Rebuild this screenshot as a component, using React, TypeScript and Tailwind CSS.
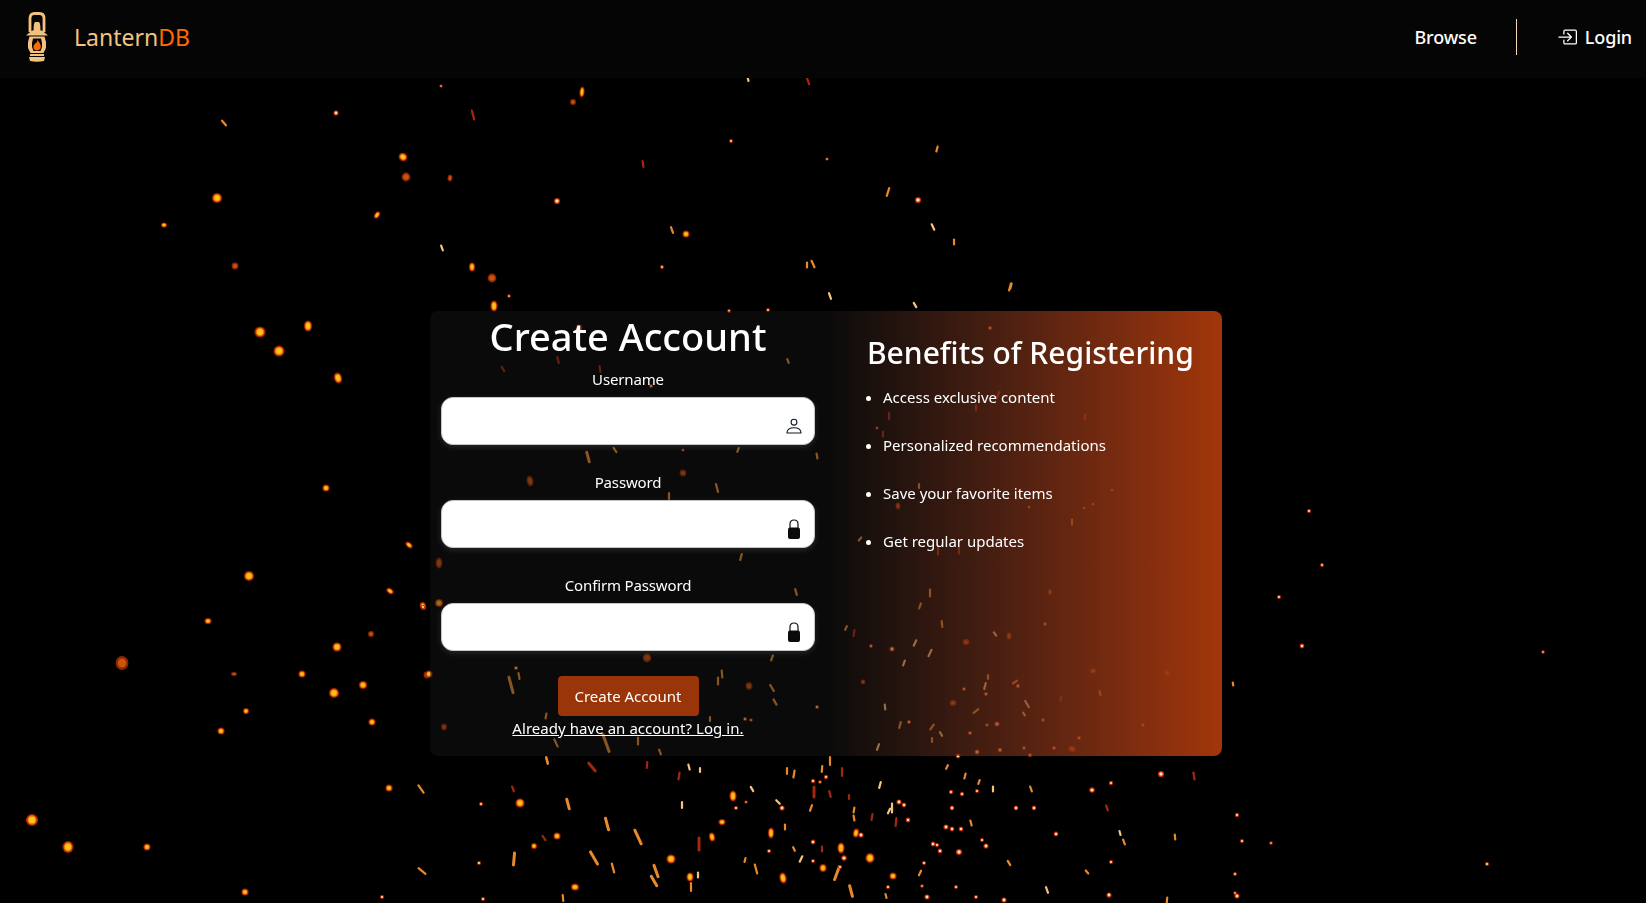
import React from 'react';
import { BsBoxArrowInRight } from 'react-icons/bs';

// [x, y, rx, ry, rotation]
const embers: number[][] = [
  [403, 157, 4, 3.5, 40], [217, 198, 4.5, 4.5, 0], [164, 225, 2.5, 2, 0], [377, 215, 2, 3.5, 35], [472, 267, 2.5, 4, 0],
  [494, 306, 3, 5, 0], [582, 92, 2, 5, 5], [260, 332, 5, 5, 0], [279, 351, 5, 5, 0], [308, 326, 3.5, 5, 0],
  [338, 378, 3.5, 5, -15], [326, 488, 3, 3, 0], [249, 576, 4.5, 4.5, 0], [390, 591, 3.5, 2, 35], [409, 545, 3.5, 2, 40],
  [423, 606, 2.5, 3.5, -15], [439, 603, 3.5, 3.5, 0], [337, 647, 4, 4, 0], [302, 674, 3, 3, 0], [334, 693, 4.5, 4.5, 0],
  [363, 685, 3.5, 3.5, 0], [429, 674, 3, 3, 0], [246, 711, 2.5, 2.5, 0], [221, 731, 3, 3, 0], [372, 722, 3, 3, 0],
  [68, 847, 5, 5.5, 0], [32, 820, 5.5, 5.5, 0], [147, 847, 3, 3, 0], [245, 892, 3, 3, 0], [389, 788, 3, 3, 0],
  [520, 803, 4, 4, 0], [557, 836, 3, 3, 0], [534, 846, 2.5, 2.5, 0], [575, 887, 3.5, 3, 0], [733, 796, 3, 5, 0],
  [712, 837, 2.5, 4, -10], [771, 833, 2.5, 5, 0], [671, 859, 4, 4, 0], [690, 877, 3, 4, 0], [783, 878, 3, 5, -10],
  [841, 848, 3, 5, 0], [823, 868, 3, 3.5, 0], [870, 858, 4, 4.5, 0], [893, 876, 3, 3, 0], [856, 833, 2.5, 4, 10],
  [722, 822, 3, 2.5, 0], [686, 234, 3, 3, 0], [208, 621, 3, 2.5, 0],
];

const dimEmbers: number[][] = [
  [406, 177, 4, 4, 0], [450, 178, 2, 3, 10], [492, 278, 4, 4, 0], [235, 266, 3, 3, 0], [573, 102, 2.5, 2.5, 0],
  [122, 663, 6, 6.5, 0], [371, 634, 2.5, 2.5, 0], [234, 674, 2.5, 1.5, 0], [579, 328, 3, 3, 0], [530, 481, 3, 5, -10],
  [683, 473, 3, 3, 0], [647, 658, 4, 4, 0], [749, 686, 3, 3.5, -15], [439, 563, 3, 5, 0], [427, 675, 3, 3, 0],
  [444, 727, 2.5, 3, 0], [966, 642, 3, 2.5, 0], [953, 703, 3, 2.5, 0], [1072, 749, 3.5, 2.5, 20], [1009, 636, 2, 3, 0],
  [1093, 671, 2.5, 2, 0], [1167, 673, 2.5, 2.5, 0], [898, 506, 2, 3, 0], [863, 682, 2, 2, 0], [1050, 592, 1.5, 2.5, 0],
];

// [x, y, length, degrees from vertical, kind 0 pale 1 orange 2 red]
const streaks: number[][] = [
  [224, 123, 6, -40, 1], [473, 115, 9, -15, 2], [442, 248, 5, -20, 0], [748, 79, 4, -15, 0], [808, 81, 7, -20, 2],
  [643, 164, 6, -10, 2], [937, 149, 5, 15, 1], [888, 192, 8, 18, 1], [933, 227, 6, -25, 0], [954, 242, 5, 0, 1],
  [672, 230, 6, -20, 1], [807, 265, 5, 0, 1], [813, 264, 7, -25, 1], [830, 296, 6, -20, 0], [915, 305, 5, -30, 0],
  [1010, 287, 7, 15, 1], [421, 789, 9, -35, 1], [568, 804, 10, -15, 1], [544, 838, 5, -35, 2], [513, 789, 5, -20, 2],
  [514, 859, 12, 5, 1], [422, 871, 9, -50, 1], [594, 858, 14, -30, 1], [563, 898, 6, -5, 1], [592, 767, 10, -40, 2],
  [547, 761, 6, -15, 1], [511, 685, 16, -15, 1], [519, 676, 6, -10, 1], [503, 369, 5, -30, 2], [600, 369, 6, -10, 2],
  [558, 360, 6, -15, 2], [788, 361, 4, -20, 1], [588, 457, 10, -15, 1], [615, 450, 5, -35, 1], [717, 488, 8, -15, 1],
  [669, 496, 6, 0, 1], [738, 450, 4, 20, 1], [817, 456, 5, -10, 1], [741, 557, 6, 15, 1], [796, 592, 6, -15, 1],
  [772, 658, 5, 20, 1], [722, 674, 7, -5, 1], [718, 681, 7, 0, 1], [772, 688, 7, -30, 1], [775, 702, 6, -30, 1],
  [710, 719, 4, 0, 1], [546, 716, 5, 10, 1], [556, 743, 8, -25, 1], [638, 741, 7, 0, 1], [606, 743, 18, -20, 1],
  [660, 752, 5, -20, 1], [547, 760, 6, -15, 1], [889, 416, 6, 0, 2], [883, 434, 5, 0, 2], [976, 408, 5, 0, 2],
  [1085, 417, 5, 10, 2], [998, 395, 7, 25, 2], [919, 486, 4, 0, 1], [1072, 522, 5, 0, 1], [959, 550, 7, 0, 2],
  [938, 550, 9, 0, 2], [860, 539, 4, 40, 1], [930, 593, 7, 0, 1], [920, 606, 5, 20, 1], [846, 628, 4, 25, 1],
  [854, 633, 6, 10, 2], [942, 624, 6, -5, 1], [995, 634, 4, -35, 0], [915, 643, 6, 25, 0], [930, 653, 7, 25, 0],
  [904, 663, 5, 20, 0], [988, 677, 4, 0, 1], [985, 686, 6, 15, 0], [1015, 682, 5, 55, 1], [1027, 704, 7, -30, 0],
  [885, 707, 5, -5, 0], [976, 711, 6, 50, 1], [1024, 714, 3, -30, 0], [900, 725, 6, 15, 1], [932, 727, 6, 35, 1],
  [941, 734, 4, -30, 0], [932, 740, 4, 0, 1], [1061, 699, 4, 15, 2], [1100, 693, 4, -15, 1], [878, 747, 6, 20, 0],
  [830, 761, 8, 0, 1], [822, 769, 6, 5, 1], [787, 771, 6, 0, 1], [794, 774, 7, 10, 1], [752, 789, 5, -30, 0],
  [778, 802, 5, -45, 0], [682, 805, 6, 0, 0], [689, 767, 5, -15, 0], [700, 770, 4, 0, 0], [647, 765, 6, 5, 2],
  [679, 776, 7, 10, 2], [607, 824, 12, -15, 1], [638, 837, 15, -25, 1], [785, 827, 5, 0, 1], [699, 844, 12, 0, 2],
  [656, 871, 12, -20, 1], [654, 881, 11, -30, 1], [613, 868, 9, -15, 1], [698, 875, 5, 0, 0], [691, 887, 8, 0, 1],
  [745, 860, 4, 15, 1], [756, 869, 9, -15, 1], [794, 849, 4, -25, 1], [801, 859, 6, 25, 0], [822, 849, 5, 0, 2],
  [837, 873, 14, 20, 1], [851, 891, 11, -15, 1], [920, 873, 5, 25, 1], [886, 896, 4, -15, 1], [1047, 890, 6, -20, 0],
  [1009, 863, 5, -30, 1], [1087, 872, 4, -40, 1], [971, 823, 5, -15, 1], [854, 818, 5, -10, 1], [872, 817, 6, 10, 2],
  [896, 822, 8, 5, 2], [892, 808, 9, 0, 0], [889, 811, 5, 25, 0], [880, 785, 6, 15, 0], [1031, 789, 5, -20, 1],
  [993, 789, 5, 0, 0], [979, 782, 4, 20, 1], [965, 776, 5, 15, 1], [947, 767, 4, 25, 1], [1194, 776, 7, -10, 2],
  [1107, 808, 5, -20, 2], [1124, 842, 5, -20, 1], [1120, 833, 4, -15, 0], [1175, 837, 5, -5, 1], [842, 772, 8, 0, 2],
  [814, 792, 10, 0, 2], [830, 794, 6, -15, 2], [849, 797, 4, 0, 2], [811, 808, 6, 20, 1], [854, 810, 5, 10, 1],
  [1167, 900, 5, 5, 1], [1011, 286, 5, 15, 1], [1233, 684, 3, -10, 1],
];

// [x, y, r]
const sparks: number[][] = [
  [336, 113, 2], [557, 201, 2.5], [918, 200, 2.5], [509, 296, 1.2], [441, 86, 1], [731, 141, 1.3], [827, 159, 1], [662, 267, 1.3],
  [768, 310, 1.3], [729, 311, 1.3], [651, 386, 1.5], [683, 450, 1], [990, 328, 1.5], [1029, 507, 1], [481, 804, 1.4], [479, 863, 1.5],
  [483, 899, 1.5], [382, 897, 1.5], [782, 808, 2], [736, 808, 1.5], [746, 802, 1], [769, 851, 1.5], [813, 842, 1.8], [813, 861, 1.4],
  [844, 858, 2.2], [840, 867, 1.5], [861, 835, 2], [888, 887, 1.5], [927, 897, 2], [922, 886, 1.2], [956, 887, 1.4], [976, 897, 1.5],
  [1004, 900, 2], [1109, 895, 2], [1237, 896, 2], [1111, 862, 1.5], [986, 846, 2], [959, 852, 2.5], [982, 840, 1.4], [940, 851, 1.8],
  [933, 844, 1.8], [937, 845, 1.5], [924, 863, 1.5], [961, 829, 1.8], [952, 829, 1.8], [946, 827, 2], [908, 820, 1.8], [899, 802, 2],
  [904, 805, 1.8], [952, 808, 1.8], [1016, 808, 1.8], [1034, 808, 1.8], [962, 794, 1.6], [951, 792, 1.6], [977, 791, 1.4], [1161, 774, 2.5],
  [1092, 790, 2.2], [1111, 783, 1.6], [1056, 834, 1.8], [1237, 815, 1.6], [1242, 841, 1.4], [1271, 843, 1.2], [1235, 874, 1.3], [813, 781, 1.6],
  [826, 777, 1.6], [820, 782, 1.2], [1309, 511, 1.5], [1322, 565, 1.3], [1279, 597, 1.5], [1302, 646, 1.8], [1543, 652, 1.2], [1487, 864, 1.5],
  [1235, 893, 1.2], [892, 649, 2], [871, 646, 1.3], [964, 689, 1.3], [986, 694, 1.5], [1018, 686, 1.6], [1045, 624, 1.3], [909, 722, 1.5],
  [987, 725, 1.2], [997, 724, 2], [970, 733, 1.5], [1043, 720, 1.3], [1079, 738, 1.4], [1000, 750, 1.8], [977, 752, 2], [1024, 748, 1.3],
  [1054, 748, 1.5], [958, 756, 1.8], [1030, 755, 1.5], [1143, 725, 1.3], [1084, 508, 1], [1093, 504, 1], [1112, 490, 1], [877, 428, 1],
  [745, 719, 1.4], [751, 720, 1.2], [817, 707, 1.5], [516, 668, 1.5], [423, 607, 1.5],
];

const streakColor = ['#f7c47c', '#e8892c', '#a3280a'];

const EmberField = () => (
  <svg className="absolute inset-0 h-full w-full" viewBox="0 0 1646 903" aria-hidden="true">
    <defs>
      <filter id="soft" x="-50%" y="-50%" width="200%" height="200%">
        <feGaussianBlur stdDeviation="0.7" />
      </filter>
    </defs>
    <g filter="url(#soft)">
      {dimEmbers.map(([x, y, rx, ry, rot], i) => (
        <g key={i} transform={`translate(${x} ${y}) rotate(${rot})`}>
          <ellipse rx={rx + 0.4} ry={ry + 0.4} fill="#8f2503" />
          <ellipse rx={rx * 0.7} ry={ry * 0.7} fill="#c8540a" />
        </g>
      ))}
      {embers.map(([x, y, rx, ry, rot], i) => (
        <g key={i} transform={`translate(${x} ${y}) rotate(${rot})`}>
          <ellipse rx={rx + 0.6} ry={ry + 0.6} fill="#a81d00" />
          <ellipse rx={rx * 0.85} ry={ry * 0.85} fill="#e97a06" />
          <ellipse rx={rx * 0.6} ry={ry * 0.6} fill="#fdc21d" />
        </g>
      ))}
      {streaks.map(([x, y, len, deg, kind], i) => (
        <line
          key={i}
          x1={x}
          y1={y - len / 2}
          x2={x}
          y2={y + len / 2}
          transform={`rotate(${deg} ${x} ${y})`}
          stroke={streakColor[kind]}
          strokeWidth={len > 9 ? 3 : 2.2}
          strokeLinecap="round"
        />
      ))}
      {sparks.map(([x, y, r], i) => (
        <g key={i}>
          <circle cx={x} cy={y} r={r + 0.6} fill="#c22a05" />
          <circle cx={x} cy={y} r={r * 0.7} fill="#ffe7a8" />
        </g>
      ))}
    </g>
  </svg>
);

const LanternLogo = () => (
  <svg width="22" height="50" viewBox="0 0 22 50" aria-hidden="true">
    <path d="M4 20V6.5Q4 1.5 8.5 1.5H13.5Q18 1.5 18 6.5V20" fill="none" stroke="#f4c27f" strokeWidth="2.8" />
    <path d="M7.5 19Q7.5 11 9 10H13Q14.5 11 14.5 19Z" fill="#f4c27f" />
    <path d="M0 23.5 6 18.5H16L22 23.5Z" fill="#f4c27f" />
    <path d="M3.5 24.5H18.5L20 30V36L17.5 41H4.5L2 36V30Z" fill="#f4c27f" />
    <path d="M7 26.5H15L16 31V35L14.5 39H7.5L6 35V31Z" fill="#050505" />
    <path
      d="M11.5 27.5C12.5 30 15 31.5 14.8 35C14.6 37.3 12.8 38.5 11 38.5C9 38.5 7.3 37 7.4 35C7.5 33.2 8.7 32.6 9.3 31C10.3 31.6 11.5 30 11.5 27.5Z"
      fill="#ff6a00"
    />
    <rect x="4" y="42" width="14" height="2" fill="#f4c27f" />
    <path d="M3 45H19L18 49Q11 50.5 4 49Z" fill="#f4c27f" />
  </svg>
);

const UserIcon = () => (
  <svg width="16" height="16" viewBox="0 0 16 16" fill="none" stroke="#111827" strokeWidth="1.1">
    <circle cx="8" cy="4.2" r="2.9" />
    <path d="M1 15C1 11.5 4 9.8 8 9.8S15 11.5 15 15Z" />
  </svg>
);

const LockIcon = () => (
  <svg width="14" height="20" viewBox="0 0 14 20" fill="none">
    <path d="M3 9V5Q3 1 7 1T11 5V9" stroke="#111" strokeWidth="1.2" />
    <rect x="1" y="8.5" width="12" height="11.5" rx="2" fill="#0a0a0a" />
  </svg>
);

const Field = ({ label, type, icon }: { label: string; type: string; icon: React.ReactNode }) => (
  <div className="flex flex-col items-center">
    <label className="mb-[7px] text-[15px] leading-[21px] tracking-[-0.15px] text-white">{label}</label>
    <div className="relative w-full">
      <input
        type={type}
        className="block h-[48px] w-full rounded-xl border border-[#c4c4c4] bg-white px-3 shadow-[0_2px_6px_rgba(255,255,255,0.12)] outline-none"
      />
      <span className="absolute right-[13px] top-[19px] flex h-[20px] w-[16px] items-center justify-center">{icon}</span>
    </div>
  </div>
);

const benefits = ['Access exclusive content', 'Personalized recommendations', 'Save your favorite items', 'Get regular updates'];

export default function App() {
  return (
    <div className="relative h-[903px] w-full overflow-hidden bg-black font-['Noto_Sans',sans-serif] text-white">
      <EmberField />

      <header className="relative flex h-[78px] items-center justify-between bg-[#050505] pb-[4px] pl-[26px] pr-[14px]">
        <div className="flex items-center">
          <LanternLogo />
          <span className="ml-[26px] text-[23px] text-[#f4c27f]">
            Lantern<span className="text-[#ff6a00]">DB</span>
          </span>
        </div>
        <nav className="flex items-center text-[18px] font-medium tracking-[-0.15px]">
          <a>Browse</a>
          <span className="ml-[39px] mr-[40px] h-[36px] w-px bg-[#f4d9b0]" />
          <a className="flex items-center gap-[8px]">
            <BsBoxArrowInRight className="text-[20px]" />
            Login
          </a>
        </nav>
      </header>

      <main className="relative flex justify-center pl-[6px] pt-[233px]">
        <div className="flex h-[445px] w-[792px] overflow-hidden rounded-lg">
          <form className="flex w-[396px] flex-col items-stretch bg-[#161616]/45 px-[11px]">
            <h1 className="h-[58px] text-center text-[38px] font-medium leading-[50px]">Create Account</h1>
            <div className="flex flex-col gap-[27px]">
              <Field label="Username" type="text" icon={<UserIcon />} />
              <Field label="Password" type="password" icon={<LockIcon />} />
              <Field label="Confirm Password" type="password" icon={<LockIcon />} />
            </div>
            <button
              type="button"
              className="mx-auto mt-[25px] h-[40px] w-[141px] rounded bg-[#9a3409] text-[15px] text-white"
            >
              Create Account
            </button>
            <a className="mt-[2px] text-center text-[15px] leading-[21px] tracking-[0.05px] underline">Already have an account? Log in.</a>
          </form>
          <section className="flex-1 bg-gradient-to-r from-[#16161673] to-[#a8380af5] pl-[41px] pt-[20px]">
            <h2 className="whitespace-nowrap text-[30px] font-medium leading-[43px]">Benefits of Registering</h2>
            <ul className="mt-[13px] flex list-disc flex-col gap-[27px] pl-[16px] text-[15px] leading-[21px]">
              {benefits.map((item) => (
                <li key={item}>{item}</li>
              ))}
            </ul>
          </section>
        </div>
      </main>
    </div>
  );
}
